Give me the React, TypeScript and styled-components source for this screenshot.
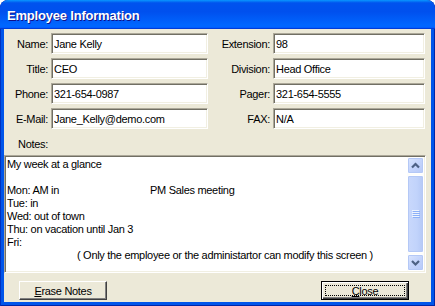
import React from "react";
import styled, { createGlobalStyle } from "styled-components";

const GlobalStyle = createGlobalStyle`
    html, body {
        margin: 0;
        padding: 0;
        background: #ffffff;
    }

    body {
        font-family: "Liberation Sans", Arial, sans-serif;
        font-size: 11px;
        letter-spacing: -0.3px;
        color: #000000;
    }
`;

const FIELDS = [
    { left: "Name:", leftValue: "Jane Kelly", right: "Extension:", rightValue: "98" },
    { left: "Title:", leftValue: "CEO", right: "Division:", rightValue: "Head Office" },
    { left: "Phone:", leftValue: "321-654-0987", right: "Pager:", rightValue: "321-654-5555" },
    { left: "E-Mail:", leftValue: "Jane_Kelly@demo.com", right: "FAX:", rightValue: "N/A" },
];

const ScrollArrow = ({ down }: { down?: boolean }) => (
    <svg width="15" height="15" viewBox="0 0 15 15">
        <path
            d={down ? "M4 6 L7.5 9.5 L11 6" : "M4 9.5 L7.5 6 L11 9.5"}
            fill="none"
            stroke="#4d6185"
            strokeWidth="2.2"
        />
    </svg>
);

const Grip = () => (
    <svg width="8" height="8" viewBox="0 0 8 8">
        {[0, 2, 4, 6].map((y) => (
            <React.Fragment key={y}>
                <rect x="0" y={y} width="7" height="1" fill="#eef4fe" />
                <rect x="1" y={y + 1} width="7" height="1" fill="#8cb0f8" />
            </React.Fragment>
        ))}
    </svg>
);

const App = () => {
    return (
        <React.Fragment>
            <GlobalStyle />
            <Window>
                <TitleBar>Employee Information</TitleBar>
                <Client>
                    <FieldGrid>
                        {FIELDS.map((row) => (
                            <React.Fragment key={row.left}>
                                <Label>{row.left}</Label>
                                <Field defaultValue={row.leftValue} />
                                <Label>{row.right}</Label>
                                <Field defaultValue={row.rightValue} />
                            </React.Fragment>
                        ))}
                    </FieldGrid>

                    <NotesLabel>Notes:</NotesLabel>

                    <NotesBox>
                        <NotesText>
                            <Line>My week at a glance</Line>
                            <Line />
                            <Line>
                                <Column $width={143}>Mon: AM in</Column>PM Sales meeting
                            </Line>
                            <Line>Tue: in</Line>
                            <Line>Wed: out of town</Line>
                            <Line>Thu: on vacation until Jan 3</Line>
                            <Line>Fri:</Line>
                            <Line $indent={70}>
                                ( Only the employee or the administartor can modify this screen )
                            </Line>
                        </NotesText>
                        <ScrollTrack>
                            <ScrollButton>
                                <ScrollArrow />
                            </ScrollButton>
                            <Thumb>
                                <Grip />
                            </Thumb>
                            <ScrollButton>
                                <ScrollArrow down />
                            </ScrollButton>
                        </ScrollTrack>
                    </NotesBox>

                    <ButtonRow>
                        <Button>
                            <Caption>
                                <u>E</u>rase Notes
                            </Caption>
                        </Button>
                        <Button $default>
                            <Caption $focused>
                                <u>C</u>lose
                            </Caption>
                        </Button>
                    </ButtonRow>
                </Client>
            </Window>
        </React.Fragment>
    );
};

export default App;

const Window = styled.div`
    width: 435px;
    height: 306px;
    box-sizing: border-box;
    display: flex;
    flex-direction: column;
    background: #0055ea;
    border-radius: 8px 8px 0 0;
    box-shadow: inset 1px 0 #0031c0, inset -1px 0 #0026a8, inset 0 -1px #0026a8;
    overflow: hidden;
`;

const TitleBar = styled.div`
    height: 29px;
    flex: none;
    display: flex;
    align-items: center;
    padding: 1px 7px 0;
    box-sizing: border-box;
    background: linear-gradient(
        to bottom,
        #0997ff 0%,
        #0053ee 10%,
        #0050ee 40%,
        #0066ff 86%,
        #0066ff 92%,
        #005bff 95%,
        #003dd7 97%,
        #003dd7 100%
    );
    border-radius: 8px 8px 0 0;
    color: #ffffff;
    font-weight: bold;
    font-size: 13px;
    letter-spacing: -0.2px;
    text-shadow: 1px 1px #0f1089;
`;

const Client = styled.div`
    flex: 1;
    margin: 0 4px 4px;
    display: flex;
    flex-direction: column;
    padding-top: 4px;
    background: #ece9d8;
`;

const FieldGrid = styled.div`
    display: grid;
    grid-template-columns: 44px 157px 59px 152px;
    grid-auto-rows: 21px;
    column-gap: 3px;
    row-gap: 4px;
`;

const Label = styled.div`
    align-self: center;
    text-align: right;
    white-space: nowrap;
`;

const Field = styled.input`
    height: 21px;
    box-sizing: border-box;
    margin: 0;
    padding: 0 2px;
    border: 1px solid;
    border-color: #aca899 #ffffff #ffffff #aca899;
    box-shadow: inset 1px 1px #716f64, inset -1px -1px #f1efe2;
    background: #ffffff;
    font-family: "Liberation Sans", Arial, sans-serif;
    font-size: 11px;
    letter-spacing: -0.3px;
    color: #000000;
    outline: none;
`;

const NotesLabel = styled.div`
    width: 44px;
    margin-top: 9px;
    line-height: 13px;
    text-align: right;
`;

const NotesBox = styled.div`
    display: flex;
    height: 118px;
    margin: 4px 5px 0 0;
    box-sizing: border-box;
    border: 1px solid;
    border-color: #aca899 #ffffff #ffffff #aca899;
    box-shadow: inset 1px 1px #716f64, inset -1px -1px #f1efe2;
    padding: 1px;
    background: #ffffff;
`;

const NotesText = styled.div`
    flex: 1;
    padding: 1px 1px;
    line-height: 13px;
    overflow: hidden;
`;

const Line = styled.div<{ $indent?: number }>`
    min-height: 13px;
    white-space: pre;
    padding-left: ${(props) => props.$indent || 0}px;
`;

const Column = styled.span<{ $width: number }>`
    display: inline-block;
    width: ${(props) => props.$width}px;
`;

const ScrollTrack = styled.div`
    width: 17px;
    flex: none;
    display: flex;
    flex-direction: column;
    gap: 1px;
    background: #fdfdfa;
`;

const ScrollButton = styled.div`
    height: 17px;
    flex: none;
    box-sizing: border-box;
    display: flex;
    align-items: center;
    justify-content: center;
    border: 1px solid #ffffff;
    border-radius: 2px;
    background: linear-gradient(135deg, #dbe6fe 0%, #c4d4fc 50%, #b6c9f8 100%);
    box-shadow: inset 0 0 0 1px #b4c8f6;
`;

const Thumb = styled.div`
    flex: 1;
    box-sizing: border-box;
    display: flex;
    align-items: center;
    justify-content: center;
    border: 1px solid #ffffff;
    border-radius: 2px;
    background: linear-gradient(to right, #c9d8fc 0%, #c1d3fb 60%, #b4c8f6 100%);
    box-shadow: inset 0 0 0 1px #b4c8f6;
`;

const ButtonRow = styled.div`
    margin-top: auto;
    display: flex;
    justify-content: space-between;
    padding: 0 22px 2px 15px;
`;

const Button = styled.div<{ $default?: boolean }>`
    width: 88px;
    height: 19px;
    box-sizing: border-box;
    padding: 3px;
    background: #ece9d8;
    border: 1px solid;
    border-color: ${(props) => (props.$default ? "#000000" : "#ffffff #404040 #404040 #ffffff")};
    box-shadow: ${(props) =>
        props.$default
            ? "inset 1px 1px #ffffff, inset -1px -1px #404040, inset -2px -2px #808080"
            : "inset -1px -1px #808080"};
`;

const Caption = styled.div<{ $focused?: boolean }>`
    height: 100%;
    box-sizing: border-box;
    display: flex;
    align-items: center;
    justify-content: center;
    border: 1px dotted ${(props) => (props.$focused ? "#000000" : "transparent")};
    white-space: nowrap;
`;
